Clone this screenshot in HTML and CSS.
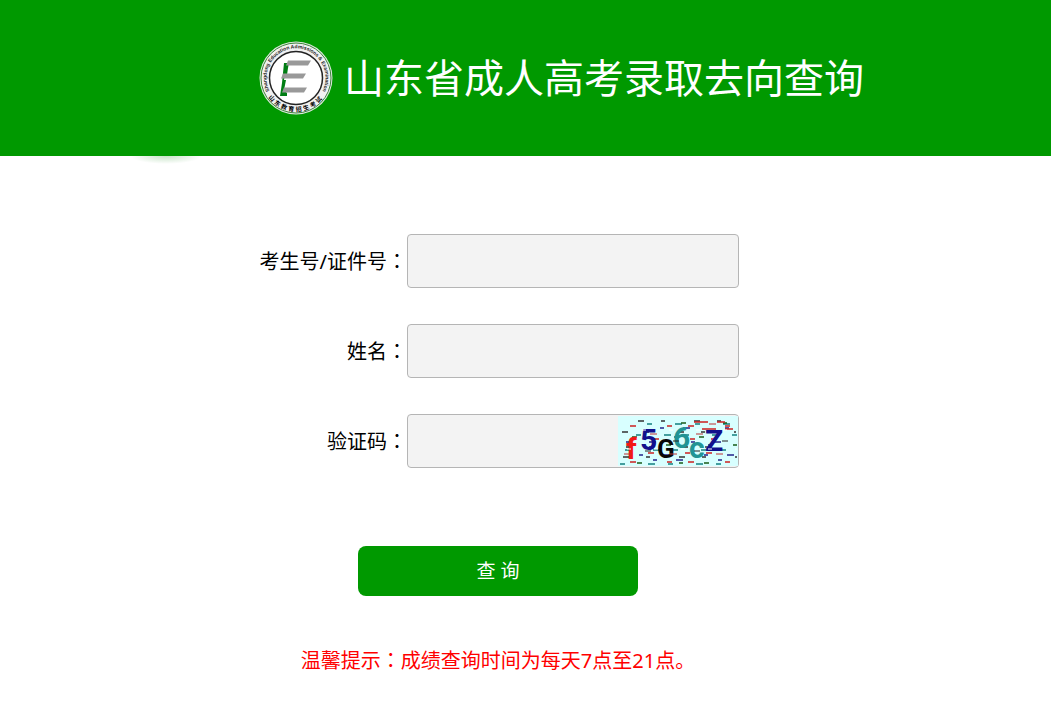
FILE: index.html
```
<!DOCTYPE html>
<html lang="zh-CN">

<head>
    <meta charset="utf-8">
    <meta name="viewport" content="width=device-width, initial-scale=1">
    <title>山东省成人高考录取去向查询</title>
    <link rel="stylesheet" href="styles.css">
</head>

<body>
    <header class="header">
        <svg class="logo" viewBox="0 0 74 76" aria-hidden="true">
            <defs>
                <path id="arc-top" d="M11.500 52.700A29.500 29.500 0 1 1 62.500 52.700" />
                <path id="arc-bottom" d="M4.500 47.500A34 34 0 0 0 69.500 47.500" />
            </defs>
            <circle cx="37" cy="38" r="36.500" fill="#dfe9df" />
            <circle cx="37" cy="38" r="35" fill="#f1f1f1" stroke="#3d843d" stroke-width="1" />
            <circle cx="37" cy="38" r="26.500" fill="#fff" stroke="#222" stroke-width="1.500" />
            <text class="logo_en"><textPath href="#arc-top" startOffset="50%" text-anchor="middle">Shangdong Education Admissions &amp; Examination</textPath></text>
            <text class="logo_cn"><textPath href="#arc-bottom" startOffset="50%" text-anchor="middle">山东教育招生考试</textPath></text>
            <path d="M25 23h5l-1 5-1 7h-2l-1 5h2l-2 10 3 3v3h-7l2-13z" fill="#007d13" />
            <path d="M29 20.500h23l-3 5H27zM24 33.500h23l-3 5H22zM25 47.500h23l-3 5H23z" fill="#999" />
        </svg>
        <h1 class="title">山东省成人高考录取去向查询</h1>
    </header>

    <main class="main">
        <form class="form" onsubmit="return false">
            <div class="fields">
                <label for="number">考生号/证件号<span class="colon" lang="zh-TW">：</span></label>
                <input type="text" id="number">
                <label for="name">姓名<span class="colon" lang="zh-TW">：</span></label>
                <input type="text" id="name">
                <label for="code">验证码<span class="colon" lang="zh-TW">：</span></label>
                <div class="code_box">
                    <input type="text" id="code">
                    <svg class="captcha" viewBox="0 0 120 50" role="img" aria-label="验证码">
                        <rect width="120" height="50" fill="#d8ffff" />
                        <g fill="none" stroke-width="1.500">
                            <path stroke="#333" stroke-dasharray="6 17 4 29" d="M20 5H119M4 16H118M8 31H119M5 41H119" />
                            <path stroke="#128080" stroke-dasharray="5 23 7 13" d="M29 8H119M18 19H119M7 34H119M2 48H119" />
                            <path stroke="#c22" stroke-dasharray="6 31 5 16" d="M12 10H119M35 23H119M30 37H119M12 46H119" />
                            <path stroke="#22228c" stroke-dasharray="4 19 7 35" d="M42 12H119M8 26H119M21 39H119M35 44H119" />
                            <path stroke="#195c19" stroke-dasharray="5 37 4 21" d="M63 7H119M14 21H119M48 29H119M19 47H119" />
                            <path stroke="#c22" stroke-dasharray="14 9 8 60" d="M76 6H119M84 13H119" />
                        </g>
                        <g class="captcha_text">
                            <text class="red" x="8" y="43">f</text>
                            <text class="navy" x="22" y="34">5</text>
                            <text class="black small" x="39" y="42">G</text>
                            <text class="teal" x="55" y="32">6</text>
                            <text class="teal" x="71" y="42">c</text>
                            <text class="navy" x="87" y="35">Z</text>
                        </g>
                        <g fill="none" stroke-width="1">
                            <path stroke="#fff" stroke-dasharray="4 23" d="M24 14H119M9 33H119" />
                            <path stroke="#b33" stroke-dasharray="7 39" d="M32 18H119M6 38H119M91 8H119" />
                            <path stroke="#222" stroke-dasharray="6 43" d="M55 25H119M27 35H119" />
                        </g>
                    </svg>
                </div>
            </div>
            <button type="submit" class="submit">查 询</button>
        </form>
        <p class="tip">温馨提示<span class="colon" lang="zh-TW">：</span>成绩查询时间为每天7点至21点。</p>
    </main>
</body>

</html>
```
FILE: styles.css
```
* {
    box-sizing: border-box;
}

body {
    margin: 0;
    background: #fff;
    color: #000;
    font: 20px/30px "Noto Sans", "Noto Sans CJK SC", sans-serif;
}

.header {
    position: relative;
    display: flex;
    align-items: center;
    justify-content: center;
    gap: 11px;
    min-height: 156px;
    padding-left: 72px;
    background: #090;
    color: #fff;
}

/* soft shade under the left part of the bar */
.header::after {
    content: "";
    position: absolute;
    top: 100%;
    left: 130px;
    width: 72px;
    height: 8px;
    background: radial-gradient(ellipse at top, rgba(0, 130, 0, .22), transparent 70%);
}

.logo {
    width: 74px;
    height: 76px;
}

.logo_en {
    font: bold 5px "Liberation Sans", sans-serif;
    fill: #222;
}

.logo_cn {
    font: bold 6px "Noto Sans CJK SC", sans-serif;
    letter-spacing: 2px;
    fill: #000;
}

.title {
    margin: 0;
    font-size: 40px;
    font-weight: 400;
    line-height: 60px;
}

.main {
    display: flex;
    flex-direction: column;
    align-items: center;
    padding: 78px 55px 32px 0;
}

.form {
    display: flex;
    flex-direction: column;
    align-items: center;
    gap: 78px;
}

.fields {
    display: grid;
    grid-template-columns: minmax(150px, auto) 332px;
    align-items: center;
    row-gap: 36px;
}

.fields label {
    text-align: right;
}

.colon {
    font-family: "Noto Sans CJK TC", sans-serif;
}

.fields input {
    display: block;
    width: 100%;
    height: 54px;
    padding: 0 12px;
    border: 1px solid #b5b5b5;
    border-radius: 4px;
    background: #f3f3f3;
    font: inherit;
}

.code_box {
    position: relative;
}

.captcha {
    position: absolute;
    top: 2px;
    right: 1px;
    width: 120px;
    height: 50px;
}

.captcha_text {
    font: bold 30px Roboto, sans-serif;
}

.captcha_text .small {
    font-size: 26px;
}

.red {
    fill: #f21818;
}

.navy {
    fill: #10108c;
}

.black {
    fill: #080808;
}

.teal {
    fill: #219494;
}

.submit {
    width: 280px;
    height: 50px;
    border: 0;
    border-radius: 8px;
    background: #090;
    color: #fff;
    font: inherit;
    font-size: 19px;
    cursor: pointer;
}

.tip {
    margin: 49px 0 0;
    color: #f00;
}
```
